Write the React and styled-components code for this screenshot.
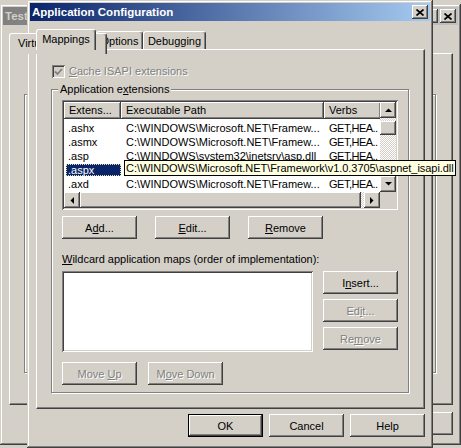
import React from "react";
import styled, { createGlobalStyle, css } from "styled-components";

const FACE = "#d4d0c8";
const SHADOW = "#808080";
const DARK = "#404040";
const FONT = `"Liberation Sans", Arial, sans-serif`;

const GlobalStyle = createGlobalStyle`
  html, body {
    margin: 0;
    padding: 0;
    background: ${FACE};
  }
  body {
    font-family: ${FONT};
    font-size: 11px;
    color: #000;
  }
`;

const raised = css`
  box-shadow: inset -1px -1px ${DARK}, inset 1px 1px #fff,
    inset -2px -2px ${SHADOW}, inset 2px 2px ${FACE};
`;

const sunken = css`
  box-shadow: inset 1px 1px ${SHADOW}, inset -1px -1px #fff,
    inset 2px 2px ${DARK}, inset -2px -2px ${FACE};
`;

const Desktop = styled.div`
  position: relative;
  width: 461px;
  height: 448px;
  overflow: hidden;
  background: ${FACE};
`;

const Window = styled.div`
  position: absolute;
  left: ${({ $left }) => $left}px;
  top: ${({ $top }) => $top}px;
  width: ${({ $width }) => $width}px;
  height: ${({ $height }) => $height}px;
  box-sizing: border-box;
  padding: 3px;
  background: ${FACE};
  box-shadow: inset -1px -1px ${DARK}, inset 1px 1px ${FACE},
    inset -2px -2px ${SHADOW}, inset 2px 2px #fff;
  display: flex;
  flex-direction: column;
`;

const TitleBar = styled.div`
  height: 18px;
  flex-shrink: 0;
  display: flex;
  align-items: center;
  padding: 0 2px;
  background: ${({ $active }) =>
    $active
      ? "linear-gradient(to right, #0a246a, #a6caf0)"
      : "linear-gradient(to right, #808080, #c0c0c0)"};
  color: ${({ $active }) => ($active ? "#fff" : FACE)};
  font-weight: bold;
  font-size: 11.5px;
  white-space: nowrap;
  overflow: hidden;
`;

const TitleText = styled.span`
  flex: 1;
  overflow: hidden;
`;

const CaptionButtons = styled.div`
  display: flex;
  gap: 2px;
`;

const CaptionButton = styled.div`
  width: 16px;
  height: 14px;
  box-sizing: border-box;
  background: ${FACE};
  ${raised};
  display: flex;
  align-items: center;
  justify-content: center;
  color: #000;
  font-size: 10px;
`;

const Body = styled.div`
  flex: 1;
  display: flex;
  flex-direction: column;
  padding: ${({ $top }) => $top}px 5px 0 6px;
  min-height: 0;
`;

const TabStrip = styled.div`
  display: flex;
  align-items: flex-end;
  height: 20px;
  flex-shrink: 0;
`;

const Tab = styled.div`
  position: relative;
  z-index: ${({ $selected }) => ($selected ? 1 : 0)};
  width: ${({ $w }) => $w}px;
  height: ${({ $selected }) => ($selected ? 21 : 18)}px;
  margin-bottom: ${({ $selected }) => ($selected ? -1 : 0)}px;
  flex-shrink: 0;
  box-sizing: border-box;
  background: ${FACE};
  border-top: 1px solid #fff;
  border-left: 1px solid #fff;
  border-right: 1px solid ${DARK};
  border-radius: 3px 3px 0 0;
  box-shadow: inset -1px 0 ${SHADOW};
  display: flex;
  align-items: center;
  justify-content: ${({ $left }) => ($left ? "flex-start" : "center")};
  padding: 0 0 ${({ $selected }) => ($selected ? 2 : 0)}px
    ${({ $left }) => ($left ? 8 : 0)}px;
  white-space: nowrap;
  overflow: hidden;
`;

const Panel = styled.div`
  flex: 1;
  min-height: 0;
  box-sizing: border-box;
  border-top: 1px solid #fff;
  border-left: 1px solid #fff;
  border-right: 1px solid ${DARK};
  border-bottom: 1px solid ${DARK};
  box-shadow: inset -1px -1px ${SHADOW};
  display: flex;
  flex-direction: column;
  padding: ${({ $pad }) => $pad};
`;

const Key = styled.u`
  text-decoration-thickness: 1px;
  text-underline-offset: 1px;
`;

const CheckRow = styled.div`
  display: flex;
  align-items: center;
  gap: 4px;
  height: 13px;
  margin-left: 1px;
`;

const CheckBox = styled.div`
  width: 13px;
  height: 13px;
  box-sizing: border-box;
  background: ${({ $disabled }) => ($disabled ? FACE : "#fff")};
  ${sunken};
  display: flex;
  align-items: center;
  justify-content: center;
`;

const Label = styled.span`
  line-height: 13px;
  white-space: nowrap;
  color: ${({ $disabled }) => ($disabled ? SHADOW : "#000")};
  text-shadow: ${({ $disabled }) => ($disabled ? "1px 1px #fff" : "none")};
`;

const Group = styled.div`
  position: relative;
  box-sizing: border-box;
  width: 358px;
  height: 304px;
  margin: 11px 0 0 0;
  border: 1px solid ${SHADOW};
  box-shadow: inset 1px 1px #fff, 1px 1px #fff;
  padding: 10px 10px 0 10px;
  display: flex;
  flex-direction: column;
`;

const BackGroup = styled.div`
  flex: 1;
  border: 1px solid ${SHADOW};
  box-shadow: inset 1px 1px #fff, 1px 1px #fff;
  margin: 40px 16px 31px 14px;
`;

const Legend = styled.span`
  position: absolute;
  top: -7px;
  left: 6px;
  padding: 0 2px;
  line-height: 13px;
  background: ${FACE};
  white-space: nowrap;
`;

const ListView = styled.div`
  box-sizing: border-box;
  height: 110px;
  flex-shrink: 0;
  padding: 2px;
  background: #fff;
  ${sunken};
  display: grid;
  grid-template-columns: 1fr 16px;
  grid-template-rows: 1fr 16px;
`;

const ListContent = styled.div`
  overflow: hidden;
  display: flex;
  flex-direction: column;
`;

const HeaderRow = styled.div`
  display: flex;
  height: 17px;
  flex-shrink: 0;
`;

const HeaderCell = styled.div`
  width: ${({ $w }) => $w}px;
  flex-shrink: 0;
  box-sizing: border-box;
  height: 17px;
  line-height: 16px;
  padding-left: 5px;
  background: ${FACE};
  box-shadow: inset -1px -1px ${DARK}, inset 1px 1px #fff,
    inset -2px -2px ${SHADOW};
  white-space: nowrap;
  overflow: hidden;
`;

const Rows = styled.div`
  padding-top: 2px;
`;

const Row = styled.div`
  display: flex;
  height: 14px;
  line-height: 14px;
  white-space: nowrap;
`;

const Cell = styled.div`
  width: ${({ $w }) => $w}px;
  flex-shrink: 0;
  box-sizing: border-box;
  padding-left: ${({ $pad }) => $pad}px;
  letter-spacing: ${({ $tight }) => ($tight ? "-0.5px" : "normal")};
  overflow: hidden;
`;

const ExtCell = styled.div`
  width: 55px;
  flex-shrink: 0;
  margin-left: 2px;
  box-sizing: border-box;
  padding-left: 2px;
  height: 12px;
  margin-top: 1px;
  line-height: 12px;
  ${({ $selected }) =>
    $selected &&
    css`
      background: #0a246a;
      color: #fff;
      outline: 1px dotted #e8e0a0;
      outline-offset: -1px;
    `}
`;

const VScroll = styled.div`
  display: flex;
  flex-direction: column;
`;

const HScroll = styled.div`
  display: flex;
`;

const Track = styled.div`
  flex: 1;
  display: flex;
  flex-direction: ${({ $vertical }) => ($vertical ? "column" : "row")};
  background-color: #fff;
  background-image: conic-gradient(
    ${FACE} 25%,
    #fff 0 50%,
    ${FACE} 0 75%,
    #fff 0
  );
  background-size: 2px 2px;
`;

const ScrollButton = styled.div`
  width: 16px;
  height: 16px;
  flex-shrink: 0;
  box-sizing: border-box;
  background: ${FACE};
  ${raised};
  display: flex;
  align-items: center;
  justify-content: center;
`;

const Thumb = styled.div`
  box-sizing: border-box;
  background: ${FACE};
  ${raised};
  ${({ $vertical }) =>
    $vertical
      ? css`
          height: 14px;
          margin-top: 3px;
        `
      : css`
          width: 281px;
        `}
`;

const Corner = styled.div`
  background: ${FACE};
`;

const ButtonRow = styled.div`
  display: flex;
  gap: ${({ $gap }) => $gap}px;
  margin: ${({ $mt }) => $mt}px 0 ${({ $mb = 0 }) => $mb}px 0;
  justify-content: ${({ $end }) => ($end ? "flex-end" : "flex-start")};
  flex-shrink: 0;
`;

const Button = styled.button`
  width: 75px;
  height: 23px;
  box-sizing: border-box;
  border: none;
  margin: 0;
  padding: 0;
  background: ${FACE};
  font-family: ${FONT};
  font-size: 11px;
  color: #000;
  ${raised};
  ${({ $default }) =>
    $default &&
    css`
      box-shadow: inset 0 0 0 1px #000, inset -2px -2px ${DARK},
        inset 2px 2px #fff, inset -3px -3px ${SHADOW};
    `}
  &:disabled {
    color: ${SHADOW};
    text-shadow: 1px 1px #fff;
  }
`;

const FieldLabel = styled.div`
  margin-top: 14px;
  line-height: 13px;
  white-space: nowrap;
`;

const WildRow = styled.div`
  display: flex;
  gap: 10px;
  margin-top: 5px;
`;

const WildList = styled.div`
  flex: 1;
  height: 81px;
  box-sizing: border-box;
  background: #fff;
  ${sunken};
`;

const SideButtons = styled.div`
  display: flex;
  flex-direction: column;
  gap: 5px;
`;

const Tooltip = styled.div`
  position: absolute;
  left: 124px;
  top: 160px;
  z-index: 5;
  height: 16px;
  box-sizing: border-box;
  padding: 0 1px;
  border: 1px solid #000;
  background: #ffffe1;
  line-height: 14px;
  white-space: nowrap;
  letter-spacing: -0.05px;
`;

const Arrow = ({ dir }) => {
  const pts = {
    up: "0,4 3.5,0.5 7,4",
    down: "0,0 7,0 3.5,3.5",
    left: "4,0 4,7 0.5,3.5",
    right: "0,0 0,7 3.5,3.5",
  }[dir];
  const vertical = dir === "up" || dir === "down";
  return (
    <svg
      width={vertical ? 7 : 4}
      height={vertical ? 4 : 7}
      viewBox={vertical ? "0 0 7 4" : "0 0 4 7"}
    >
      <polygon points={pts} fill="#000" />
    </svg>
  );
};

const CloseGlyph = () => (
  <svg width="8" height="7" viewBox="0 0 8 7">
    <path d="M0.5 0.5 L7.5 6.5 M7.5 0.5 L0.5 6.5" stroke="#000" strokeWidth="1.7" />
  </svg>
);

const CheckGlyph = () => (
  <svg width="9" height="8" viewBox="0 0 9 8">
    <polyline points="1,3.5 3.5,6 8,1" fill="none" stroke={SHADOW} strokeWidth="1.8" />
  </svg>
);

const FRAMEWORK = "C:\\WINDOWS\\Microsoft.NET\\Framew...";

// the .aspx row sits under its tooltip, so only the extension shows
const rows = [
  { ext: ".ashx", path: FRAMEWORK, verbs: "GET,HEA.." },
  { ext: ".asmx", path: FRAMEWORK, verbs: "GET,HEA.." },
  { ext: ".asp", path: "C:\\WINDOWS\\system32\\inetsrv\\asp.dll", verbs: "GET,HEA.." },
  { ext: ".aspx", path: "", verbs: "", selected: true },
  { ext: ".axd", path: FRAMEWORK, verbs: "GET,HEA.." },
];

const BackWindow = () => (
  <Window $left={0} $top={4} $width={461} $height={441}>
    <TitleBar>
      <TitleText>Test</TitleText>
      <CaptionButtons>
        <CaptionButton>?</CaptionButton>
        <CaptionButton>
          <CloseGlyph />
        </CaptionButton>
      </CaptionButtons>
    </TitleBar>
    <Body $top={8}>
      <TabStrip>
        <Tab $selected $left $w={98}>
          Virtu
        </Tab>
      </TabStrip>
      <Panel $pad="0">
        <BackGroup />
      </Panel>
      <ButtonRow $end $gap={6} $mt={7} $mb={7}>
        <Button>Help</Button>
      </ButtonRow>
    </Body>
  </Window>
);

const FrontWindow = () => (
  <Window $left={27} $top={0} $width={406} $height={448}>
    <TitleBar $active>
      <TitleText>Application Configuration</TitleText>
      <CaptionButtons>
        <CaptionButton>
          <CloseGlyph />
        </CaptionButton>
      </CaptionButtons>
    </TitleBar>
    <Body $top={8}>
      <TabStrip>
        <Tab $selected $w={60}>
          Mappings
        </Tab>
        <Tab $w={47}>Options</Tab>
        <Tab $w={63}>Debugging</Tab>
      </TabStrip>
      <Panel $pad="15px 0 0 14px">
        <CheckRow>
          <CheckBox $disabled>
            <CheckGlyph />
          </CheckBox>
          <Label $disabled>
            <Key>C</Key>ache ISAPI extensions
          </Label>
        </CheckRow>
        <Group>
          <Legend>
            Application e<Key>x</Key>tensions
          </Legend>
          <ListView>
            <ListContent>
              <HeaderRow>
                <HeaderCell $w={57}>Extens...</HeaderCell>
                <HeaderCell $w={203}>Executable Path</HeaderCell>
                <HeaderCell $w={57}>Verbs</HeaderCell>
              </HeaderRow>
              <Rows>
                {rows.map((r) => (
                  <Row key={r.ext}>
                    <ExtCell $selected={r.selected}>{r.ext}</ExtCell>
                    <Cell $w={203} $pad={5}>
                      {r.path}
                    </Cell>
                    <Cell $w={57} $pad={5} $tight>
                      {r.verbs}
                    </Cell>
                  </Row>
                ))}
              </Rows>
            </ListContent>
            <VScroll>
              <ScrollButton>
                <Arrow dir="up" />
              </ScrollButton>
              <Track $vertical>
                <Thumb $vertical />
              </Track>
              <ScrollButton>
                <Arrow dir="down" />
              </ScrollButton>
            </VScroll>
            <HScroll>
              <ScrollButton>
                <Arrow dir="left" />
              </ScrollButton>
              <Track>
                <Thumb />
              </Track>
              <ScrollButton>
                <Arrow dir="right" />
              </ScrollButton>
            </HScroll>
            <Corner />
          </ListView>
          <ButtonRow $gap={18} $mt={6}>
            <Button>
              A<Key>d</Key>d...
            </Button>
            <Button>
              <Key>E</Key>dit...
            </Button>
            <Button>
              <Key>R</Key>emove
            </Button>
          </ButtonRow>
          <FieldLabel>
            <Key>W</Key>ildcard application maps (order of implementation):
          </FieldLabel>
          <WildRow>
            <WildList />
            <SideButtons>
              <Button>
                I<Key>n</Key>sert...
              </Button>
              <Button disabled>
                Ed<Key>i</Key>t...
              </Button>
              <Button disabled>
                Re<Key>m</Key>ove
              </Button>
            </SideButtons>
          </WildRow>
          <ButtonRow $gap={11} $mt={10}>
            <Button disabled>
              Move <Key>U</Key>p
            </Button>
            <Button disabled>
              M<Key>o</Key>ve Down
            </Button>
          </ButtonRow>
        </Group>
      </Panel>
      <ButtonRow $end $gap={6} $mt={5} $mb={8}>
        <Button $default>OK</Button>
        <Button>Cancel</Button>
        <Button>Help</Button>
      </ButtonRow>
    </Body>
  </Window>
);

export default function App() {
  return (
    <>
      <GlobalStyle />
      <Desktop>
        <BackWindow />
        <FrontWindow />
        <Tooltip>
          C:\WINDOWS\Microsoft.NET\Framework\v1.0.3705\aspnet_isapi.dll
        </Tooltip>
      </Desktop>
    </>
  );
}
